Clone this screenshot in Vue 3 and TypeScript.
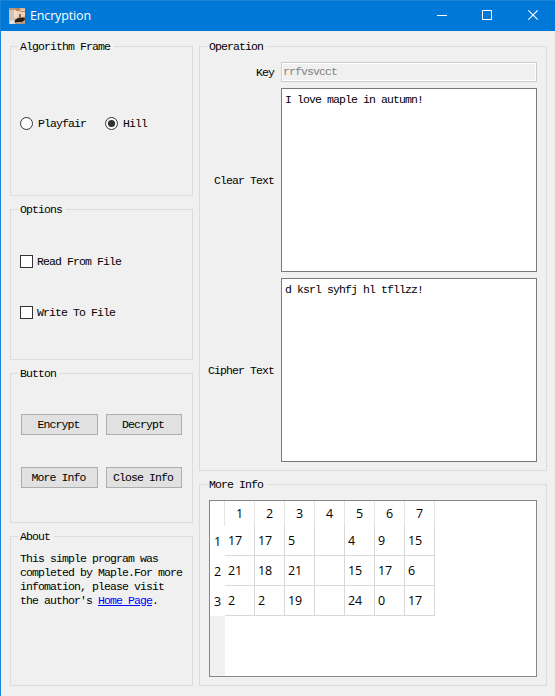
<script setup lang="ts">
import { ref } from 'vue'

const algorithm = ref('Hill')
const algorithms: string[] = ['Playfair', 'Hill']
const options: string[] = ['Read From File', 'Write To File']
const buttons: string[] = ['Encrypt', 'Decrypt', 'More Info', 'Close Info']
const columns: number[] = [1, 2, 3, 4, 5, 6, 7]
const rows: string[][] = [
  ['17', '17', '5', '', '4', '9', '15'],
  ['21', '18', '21', '', '15', '17', '6'],
  ['2', '2', '19', '', '24', '0', '17'],
]
</script>

<template>
  <div class="window">
    <header class="titlebar">
      <svg class="app-icon" viewBox="0 0 16 16" width="16" height="16">
        <rect width="16" height="16" fill="#d6b9a4" />
        <rect width="7" height="2" fill="#b8957b" />
        <path d="M0 2h6v9l-2 2H0z" fill="#d8c0b0" />
        <path d="M5 2h11v6l-4 1-5-1z" fill="#f0d3b6" />
        <path d="M7 0h4v3H7zM11 3h5v1h-5z" fill="#bd885e" />
        <path d="M5 3h3v7H5z" fill="#efdccb" />
        <path d="M10 6h2v3h4v3h-6z" fill="#916950" />
        <path d="M6 12l3-2h6l1 2-3 2H9l-4 1z" fill="#2b1c17" />
        <path d="M1 13l4-1 1 2-1 2H1z" fill="#dde5ee" />
        <path d="M7 15l6-1h3v2H7z" fill="#b59480" />
      </svg>
      <span class="title">Encryption</span>
      <div class="controls">
        <svg class="minimize" width="11" height="11" viewBox="0 0 11 11"><path d="M0 5.5h10" stroke="#fff" /></svg>
        <svg width="11" height="11" viewBox="0 0 11 11"><path d="M.5.5h9v9h-9z" fill="none" stroke="#fff" /></svg>
        <svg width="11" height="11" viewBox="0 0 11 11"><path d="M.3.3l9.4 9.4M9.7.3L.3 9.7" stroke="#fff" stroke-width="1.1" /></svg>
      </div>
    </header>

    <main class="body">
      <div class="left">
        <section class="group">
          <h2>Algorithm Frame</h2>
          <div class="radios">
            <label v-for="name in algorithms" :key="name" class="radio" @click="algorithm = name">
              <svg width="13" height="13" viewBox="0 0 13 13">
                <circle cx="6.5" cy="6.5" r="6" fill="#fff" stroke="#333" />
                <circle v-if="algorithm === name" cx="6.5" cy="6.5" r="3.6" fill="#333" />
              </svg>
              <span>{{ name }}</span>
            </label>
          </div>
        </section>

        <section class="group tall">
          <h2>Options</h2>
          <div class="checks">
            <label v-for="name in options" :key="name" class="check">
              <i class="box"></i><span>{{ name }}</span>
            </label>
          </div>
        </section>

        <section class="group">
          <h2>Button</h2>
          <div class="buttons">
            <button v-for="name in buttons" :key="name" type="button">{{ name }}</button>
          </div>
        </section>

        <section class="group">
          <h2>About</h2>
          <p class="about">This simple program was<br />completed by Maple.For more<br />infomation, please visit<br />the author's <a href="#">Home Page</a>.</p>
        </section>
      </div>

      <div class="right">
        <section class="group operation">
          <h2>Operation</h2>
          <div class="form">
            <span class="label">Key</span>
            <div class="key">rrfvsvcct</div>
            <span class="label">Clear Text</span>
            <div class="textbox">I love maple in autumn!</div>
            <span class="label">Cipher Text</span>
            <div class="textbox">d ksrl syhfj hl tfllzz!</div>
          </div>
        </section>

        <section class="group info">
          <h2>More Info</h2>
          <div class="table">
            <div class="row head">
              <span class="rowhead"></span>
              <span v-for="c in columns" :key="c" class="cell">{{ c }}</span>
            </div>
            <div v-for="(row, i) in rows" :key="i" class="row">
              <span class="rowhead">{{ i + 1 }}</span>
              <span v-for="(value, j) in row" :key="j" class="cell">{{ value }}</span>
            </div>
            <div class="gutter"></div>
          </div>
        </section>
      </div>
    </main>
  </div>
</template>

<style>
body {
  margin: 0;
  overflow: hidden;
}
</style>

<style scoped>
* {
  box-sizing: border-box;
}
.window {
  width: 555px;
  height: 696px;
  background: #f0f0f0;
  border-left: 1px solid #1883d7;
  color: #000;
  font: 11.5px/14px 'Liberation Mono', monospace;
  letter-spacing: -0.9px;
  white-space: pre;
}
.titlebar {
  display: flex;
  align-items: center;
  height: 31px;
  padding: 0 16px 0 8px;
  background: #0078d7;
  border-top: 1px solid #1883d7;
  color: #fff;
}
.title {
  margin-left: 5px;
  font: 12.5px/16px 'Open Sans', sans-serif;
  letter-spacing: -0.15px;
}
.controls {
  display: flex;
  gap: 35px;
  margin-left: auto;
}
.controls svg {
  display: block;
  margin-top: -1px;
}
.controls .minimize {
  margin-right: -1px;
}
.body {
  display: flex;
  gap: 6px;
  padding: 15px 8px 10px 9px;
}
.left {
  display: flex;
  flex-direction: column;
  gap: 13px;
  width: 183px;
}
.right {
  display: flex;
  flex-direction: column;
  gap: 13px;
  width: 348px;
}
.group {
  height: 150px;
  border: 1px solid #dcdcdc;
}
.tall {
  height: 151px;
}
h2 {
  width: max-content;
  height: 14px;
  margin: -7px 0 0 7px;
  padding: 0 4px 0 2px;
  background: #f0f0f0;
  font: inherit;
}
.radios {
  display: flex;
  gap: 19px;
  padding: 63px 0 0 9px;
}
.radio,
.check {
  display: flex;
  align-items: flex-start;
}
.radio {
  gap: 5px;
}
.check {
  gap: 4px;
}
.box {
  width: 13px;
  height: 13px;
  background: #fff;
  border: 1px solid #333;
}
.checks {
  display: flex;
  flex-direction: column;
  gap: 37px;
  padding: 38px 0 0 9px;
}
.buttons {
  display: grid;
  grid-template-columns: 77px 76px;
  grid-auto-rows: 21px;
  gap: 32px 8px;
  padding: 33px 0 0 10px;
}
button {
  padding: 1px 2px 0 0;
  background: #e1e1e1;
  border: 1px solid #adadad;
  color: #000;
  font: inherit;
  letter-spacing: inherit;
}
.about {
  margin: 8px 0 0 9px;
}
.about a {
  color: #00f;
}
.operation {
  height: 425px;
}
.form {
  display: grid;
  grid-template-columns: 66px 256px;
  grid-template-rows: 20px 184px 184px;
  gap: 6px;
  align-items: center;
  padding: 8px 0 0 9px;
}
.label {
  padding: 2px 1px 0 0;
  margin-left: -4px;
  text-align: right;
}
.key {
  height: 20px;
  padding: 2px 1px;
  background: #f0f0f0;
  border: 1px solid #ccc;
  box-shadow: inset 0 0 0 1px #fff;
  color: #808080;
}
.textbox {
  height: 184px;
  padding: 4px 3px;
  background: #fff;
  border: 1px solid #7a7a7a;
}
.info {
  height: 202px;
}
.table {
  display: flex;
  flex-direction: column;
  width: 328px;
  height: 177px;
  margin: 8px 0 0 9px;
  background: #fff;
  border: 1px solid #828790;
  font: 12.5px/16px 'Open Sans', sans-serif;
  letter-spacing: -0.2px;
}
.row {
  display: flex;
  height: 30px;
}
.rowhead {
  display: flex;
  align-items: center;
  justify-content: center;
  width: 15px;
  padding-top: 2px;
}
.cell {
  display: flex;
  align-items: center;
  width: 30px;
  padding-left: 3px;
  border-right: 1px solid #d8d8d8;
  border-bottom: 1px solid #d8d8d8;
}
.head {
  height: 25px;
}
.head .rowhead {
  border-right: 1px solid #e5e5e5;
}
.head .cell {
  justify-content: center;
  padding-left: 0;
  border-right-color: #e5e5e5;
  border-bottom: 0;
}
.gutter {
  flex: 1;
  width: 15px;
  background: #f0f0f0;
}
</style>
